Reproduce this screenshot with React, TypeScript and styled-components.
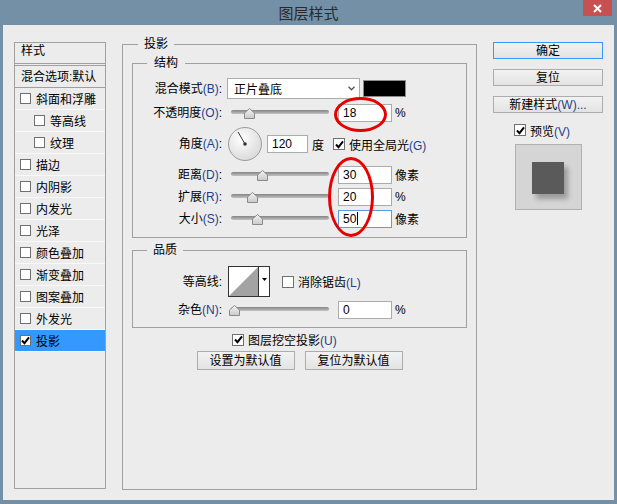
import styled, { createGlobalStyle } from "styled-components";

const GlobalStyle = createGlobalStyle`
  html, body {
    margin: 0;
    padding: 0;
  }
  body {
    font-family: "Liberation Sans", "Noto Sans CJK SC", sans-serif;
    font-size: 12px;
    color: #000;
    background: #7390a7;
  }
  * {
    box-sizing: border-box;
  }
`;

const Frame = styled.div`
  width: 617px;
  height: 504px;
  display: flex;
  flex-direction: column;
  padding: 0 3px 4px;
  background: #7390a7;
`;

const TitleBar = styled.div`
  position: relative;
  height: 25px;
  display: flex;
  align-items: center;
  justify-content: center;
  font-family: "Noto Sans CJK SC", sans-serif;
  font-size: 15px;
  color: #2a2a2a;
`;

const CloseButton = styled.div`
  position: absolute;
  top: 0;
  right: 2px;
  width: 29px;
  height: 16px;
  display: flex;
  align-items: center;
  justify-content: center;
  background: #c75050;
`;

const Body = styled.div`
  flex: 1;
  display: flex;
  align-items: flex-start;
  padding: 17px 0 0 11px;
  background: #ececec;
`;

/* left list */

const StyleList = styled.div`
  width: 92px;
  height: 447px;
  border: 1px solid #a0a0a0;
  flex-shrink: 0;
  overflow: hidden;
`;

const ListHeader = styled.div`
  height: 23px;
  padding: 1px 0 0 6px;
  line-height: 14px;
  border-bottom: 3px double #a0a0a0;
`;

const BlendRow = styled.div`
  height: 22px;
  padding: 0 0 2px 6px;
  display: flex;
  align-items: center;
  white-space: nowrap;
  border-bottom: 1px solid #a0a0a0;
`;

const StyleItem = styled.div<{ $indent?: boolean; $active?: boolean }>`
  height: 22px;
  display: flex;
  align-items: center;
  gap: 5px;
  padding-left: ${(p) => (p.$indent ? 19 : 5)}px;
  border-bottom: 1px solid #f9f9f9;
  background: ${(p) => (p.$active ? "#3399ff" : "transparent")};
  white-space: nowrap;
`;

const Box = styled.span<{ $size?: number }>`
  width: ${(p) => p.$size ?? 12}px;
  height: ${(p) => p.$size ?? 12}px;
  flex-shrink: 0;
  display: inline-flex;
  align-items: center;
  justify-content: center;
  border: 1px solid #707070;
  background: #fff;
`;

function CheckBox({ checked, size }: { checked?: boolean; size?: number }) {
  return (
    <Box $size={size}>
      {checked && (
        <svg width="9" height="9" viewBox="0 0 9 9">
          <path d="M1 4.5 L3.5 7.2 L8 1.3" fill="none" stroke="#000" strokeWidth="2" />
        </svg>
      )}
    </Box>
  );
}

/* groups */

const EffectGroup = styled.div`
  position: relative;
  width: 355px;
  height: 446px;
  margin: 2px 0 0 16px;
  padding: 18px 9px 0;
  border: 1px solid #a0a0a0;
  flex-shrink: 0;
`;

const SubGroup = styled.div<{ $h: number; $top: number; $gap: number }>`
  position: relative;
  height: ${(p) => p.$h}px;
  padding-top: ${(p) => p.$top}px;
  border: 1px solid #a0a0a0;
  display: flex;
  flex-direction: column;
  gap: ${(p) => p.$gap}px;
  & + & {
    margin-top: 12px;
  }
`;

const Legend = styled.span<{ $left: number; $pad: number }>`
  position: absolute;
  top: -8px;
  left: ${(p) => p.$left}px;
  padding: 0 ${(p) => p.$pad}px;
  line-height: 14px;
  background: #ececec;
`;

const FieldRow = styled.div<{ $h: number }>`
  display: flex;
  align-items: center;
  height: ${(p) => p.$h}px;
  white-space: nowrap;
`;

const FieldLabel = styled.span`
  width: 89px;
  margin-right: 5px;
  flex-shrink: 0;
  text-align: right;
  line-height: 14px;
`;

const Key = styled.span`
  color: #1e3f8a;
`;

const Select = styled.div`
  width: 133px;
  height: 21px;
  display: flex;
  align-items: center;
  justify-content: space-between;
  padding: 0 4px 0 6px;
  border: 1px solid #acacac;
  background: #fff;
`;

const Swatch = styled.div`
  width: 43px;
  height: 17px;
  margin-left: 3px;
  border: 1px solid #8c8c8c;
  background: #000;
`;

const SliderBox = styled.div<{ $w?: number }>`
  position: relative;
  width: 98px;
  height: 18px;
  margin-left: 4px;
  flex-shrink: 0;
`;

const SliderTrack = styled.div`
  position: absolute;
  left: 0;
  right: 0;
  top: 6px;
  height: 4px;
  border-radius: 2px;
  background: linear-gradient(#848484, #c2c2c2);
`;

const SliderThumb = styled.svg`
  position: absolute;
  top: 4px;
`;

function Slider({ at }: { at: number }) {
  return (
    <SliderBox>
      <SliderTrack />
      <SliderThumb width="11" height="11" viewBox="0 0 11 11" style={{ left: at - 5.5 }}>
        <defs>
          <linearGradient id="thumbFill" x1="0" y1="0" x2="0" y2="1">
            <stop offset="0" stopColor="#f4f4f4" />
            <stop offset="1" stopColor="#c9c9c9" />
          </linearGradient>
        </defs>
        <polygon points="5.5,0.5 10.5,5 10.5,10.5 0.5,10.5 0.5,5" fill="url(#thumbFill)" stroke="#8a8a8a" />
      </SliderThumb>
    </SliderBox>
  );
}

const NumberField = styled.div<{ $w?: number; $gap?: number; $focus?: boolean }>`
  width: ${(p) => p.$w ?? 54}px;
  height: 18px;
  margin-left: ${(p) => p.$gap ?? 9}px;
  padding-left: 4px;
  display: flex;
  align-items: center;
  border: 1px solid ${(p) => (p.$focus ? "#569de5" : "#ababab")};
  background: #fff;
  flex-shrink: 0;
`;

const Caret = styled.span`
  width: 1px;
  height: 13px;
  margin-left: 1px;
  background: #000;
`;

const Unit = styled.span<{ $gap?: number }>`
  margin-left: ${(p) => p.$gap ?? 3}px;
`;

const Dial = styled.svg`
  margin-left: 1px;
  flex-shrink: 0;
`;

const CheckText = styled.span`
  margin-left: 4px;
`;

const ContourPicker = styled.div`
  display: flex;
  width: 42px;
  height: 31px;
  margin-left: 1px;
  border: 1px solid #333;
  background: #fff;
`;

const ContourArrow = styled.div`
  width: 11px;
  display: flex;
  justify-content: center;
  padding-top: 11px;
  border-left: 1px solid #333;
`;

const Annotation = styled.div<{ $x: number; $y: number; $w: number; $h: number }>`
  position: absolute;
  left: ${(p) => p.$x}px;
  top: ${(p) => p.$y}px;
  width: ${(p) => p.$w}px;
  height: ${(p) => p.$h}px;
  border: 3px solid #e60000;
  border-radius: 50%;
  pointer-events: none;
`;

const OptionRow = styled.div`
  height: 15px;
  margin-top: 4px;
  padding-left: 100px;
  display: flex;
  align-items: center;
`;

const ButtonRow = styled.div`
  margin-top: 4px;
  display: flex;
  justify-content: center;
  gap: 10px;
`;

const DialogButton = styled.button<{ $w?: number; $h?: number; $primary?: boolean }>`
  width: ${(p) => p.$w ?? 98}px;
  height: ${(p) => p.$h ?? 19}px;
  padding: 0;
  border: 1px solid ${(p) => (p.$primary ? "#3399ff" : "#acacac")};
  background: linear-gradient(#f2f2f2, #e3e3e3);
  font-family: "Liberation Sans", "Noto Sans CJK SC", sans-serif;
  font-size: 12px;
  line-height: 14px;
  color: #000;
`;

/* right column */

const SideColumn = styled.div`
  width: 110px;
  margin-left: 16px;
  display: flex;
  flex-direction: column;
  gap: 10px;
  flex-shrink: 0;
`;

const PreviewToggle = styled.div`
  height: 14px;
  padding-left: 21px;
  display: flex;
  align-items: center;
`;

const PreviewBox = styled.div`
  width: 67px;
  height: 66px;
  margin: -3px 0 0 22px;
  padding: 17px 0 0 16px;
  border: 1px solid #b0b0b0;
  background: #d5d5d5;
`;

const PreviewSquare = styled.div`
  width: 32px;
  height: 32px;
  background: #5a5a5a;
  box-shadow: 4px 5px 5px rgba(0, 0, 0, 0.28);
`;

const styleItems = [
  { name: "斜面和浮雕" },
  { name: "等高线", indent: true },
  { name: "纹理", indent: true },
  { name: "描边" },
  { name: "内阴影" },
  { name: "内发光" },
  { name: "光泽" },
  { name: "颜色叠加" },
  { name: "渐变叠加" },
  { name: "图案叠加" },
  { name: "外发光" },
  { name: "投影", active: true },
];

const metricRows = [
  { label: "距离", key: "D", at: 31, value: "30", unit: "像素" },
  { label: "扩展", key: "R", at: 21, value: "20", unit: "%" },
  { label: "大小", key: "S", at: 26, value: "50", unit: "像素", focus: true },
];

export default function App() {
  return (
    <>
      <GlobalStyle />
      <Frame>
        <TitleBar>
          图层样式
          <CloseButton>
            <svg width="9" height="9" viewBox="0 0 9 9">
              <path d="M1 1 L8 8 M8 1 L1 8" stroke="#fff" strokeWidth="2" />
            </svg>
          </CloseButton>
        </TitleBar>
        <Body>
          <StyleList>
            <ListHeader>样式</ListHeader>
            <BlendRow>混合选项:默认</BlendRow>
            {styleItems.map((it) => (
              <StyleItem key={it.name} $indent={it.indent} $active={it.active}>
                <CheckBox size={11} checked={it.active} />
                {it.name}
              </StyleItem>
            ))}
          </StyleList>

          <EffectGroup>
            <Legend $left={15} $pad={6}>投影</Legend>
            <SubGroup $h={175} $top={14} $gap={5}>
              <Legend $left={14} $pad={7}>结构</Legend>
              <FieldRow $h={21}>
                <FieldLabel>
                  混合模式<Key>(B)</Key>:
                </FieldLabel>
                <Select>
                  正片叠底
                  <svg width="7" height="5" viewBox="0 0 7 5">
                    <path d="M0.5 0.8 L3.5 3.8 L6.5 0.8" fill="none" stroke="#555" strokeWidth="1.3" />
                  </svg>
                </Select>
                <Swatch />
              </FieldRow>
              <FieldRow $h={18}>
                <FieldLabel>
                  不透明度<Key>(O)</Key>:
                </FieldLabel>
                <Slider at={18} />
                <NumberField>18</NumberField>
                <Unit>%</Unit>
              </FieldRow>
              <FieldRow $h={34}>
                <FieldLabel>
                  角度<Key>(A)</Key>:
                </FieldLabel>
                <Dial width="34" height="34" viewBox="0 0 34 34">
                  <defs>
                    <radialGradient id="dialFill" cx="0.4" cy="0.35" r="0.7">
                      <stop offset="0" stopColor="#ffffff" />
                      <stop offset="1" stopColor="#d8d8d8" />
                    </radialGradient>
                  </defs>
                  <circle cx="17" cy="17" r="16.5" fill="url(#dialFill)" stroke="#9c9c9c" />
                  <line x1="17" y1="17" x2="10" y2="4.9" stroke="#333" strokeWidth="1" />
                  <circle cx="17" cy="17" r="1.8" fill="#333" />
                </Dial>
                <NumberField $w={41} $gap={5}>120</NumberField>
                <Unit $gap={4}>度</Unit>
                <span style={{ width: 9 }} />
                <CheckBox checked />
                <CheckText>
                  使用全局光<Key>(G)</Key>
                </CheckText>
              </FieldRow>
              {metricRows.map((r) => (
                <FieldRow $h={17} key={r.key}>
                  <FieldLabel>
                    {r.label}
                    <Key>({r.key})</Key>:
                  </FieldLabel>
                  <Slider at={r.at} />
                  <NumberField $focus={r.focus}>
                    {r.value}
                    {r.focus && <Caret />}
                  </NumberField>
                  <Unit>{r.unit}</Unit>
                </FieldRow>
              ))}
              <Annotation $x={201} $y={33} $w={53} $h={35} />
              <Annotation $x={195} $y={93} $w={46} $h={80} />
            </SubGroup>

            <SubGroup $h={78} $top={15} $gap={4}>
              <Legend $left={14} $pad={6}>品质</Legend>
              <FieldRow $h={31}>
                <FieldLabel>等高线:</FieldLabel>
                <ContourPicker>
                  <svg width="29" height="29" viewBox="0 0 29 29">
                    <polygon points="0,29 29,0 29,29" fill="#a3a3a3" />
                  </svg>
                  <ContourArrow>
                    <svg width="5" height="3" viewBox="0 0 5 3">
                      <polygon points="0,0 5,0 2.5,3" fill="#000" />
                    </svg>
                  </ContourArrow>
                </ContourPicker>
                <span style={{ width: 12 }} />
                <CheckBox />
                <CheckText>
                  消除锯齿<Key>(L)</Key>
                </CheckText>
              </FieldRow>
              <FieldRow $h={18}>
                <FieldLabel>
                  杂色<Key>(N)</Key>:
                </FieldLabel>
                <Slider at={3} />
                <NumberField>0</NumberField>
                <Unit>%</Unit>
              </FieldRow>
            </SubGroup>

            <OptionRow>
              <CheckBox checked />
              <CheckText>
                图层挖空投影<Key>(U)</Key>
              </CheckText>
            </OptionRow>
            <ButtonRow>
              <DialogButton>设置为默认值</DialogButton>
              <DialogButton>复位为默认值</DialogButton>
            </ButtonRow>
          </EffectGroup>

          <SideColumn>
            <DialogButton $w={110} $h={17} $primary>确定</DialogButton>
            <DialogButton $w={110} $h={17}>复位</DialogButton>
            <DialogButton $w={110} $h={17}>
              新建样式<Key>(W)...</Key>
            </DialogButton>
            <PreviewToggle>
              <CheckBox checked />
              <CheckText>
                预览<Key>(V)</Key>
              </CheckText>
            </PreviewToggle>
            <PreviewBox>
              <PreviewSquare />
            </PreviewBox>
          </SideColumn>
        </Body>
      </Frame>
    </>
  );
}
